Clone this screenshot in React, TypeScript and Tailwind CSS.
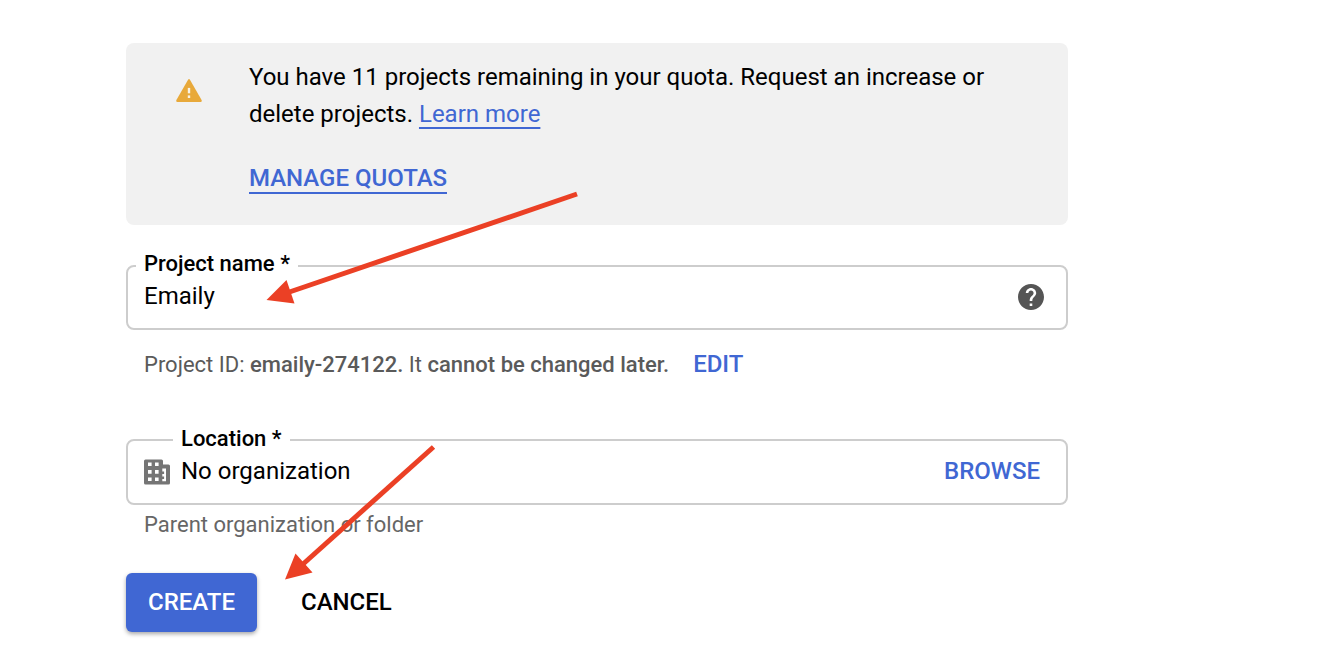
import { useState, type ReactNode } from "react";

function WarningIcon() {
  return (
    <svg viewBox="0 0 26 23" className="h-[23px] w-[26px]" aria-hidden="true">
      <path
        d="M12.2 0.6 Q13 -0.4 13.8 0.6 L25.6 21 Q26.2 23 24.6 23 H1.4 Q-0.2 23 0.4 21 Z"
        fill="#e8a93a"
      />
      <rect x="11.8" y="8.9" width="2.4" height="5.4" fill="#f8f3e6" />
      <rect x="11.8" y="16.4" width="2.4" height="2.6" fill="#f8f3e6" />
    </svg>
  );
}

function HelpIcon() {
  return (
    <svg viewBox="2 2 20 20" className="size-[26px]" fill="#555" aria-hidden="true">
      <path d="M12 2C6.48 2 2 6.48 2 12s4.48 10 10 10 10-4.48 10-10S17.52 2 12 2zm1 17h-2v-2h2v2zm2.07-7.75l-.9.92C13.45 12.9 13 13.5 13 15h-2v-.5c0-1.1.45-2.1 1.17-2.83l1.24-1.26c.37-.36.59-.86.59-1.41 0-1.1-.9-2-2-2s-2 .9-2 2H8c0-2.21 1.79-4 4-4s4 1.79 4 4c0 .88-.36 1.68-.93 2.25z" />
    </svg>
  );
}

function OrganizationIcon() {
  return (
    <svg viewBox="0 0 26 26" className="size-[26px]" aria-hidden="true">
      <path
        d="M1.5 0.5h16q1.5 0 1.5 1.5v3.5h5.5q1.5 0 1.5 1.5v17q0 1.5-1.5 1.5h-23q-1.5 0-1.5-1.5V2q0-1.5 1.5-1.5z"
        fill="#757575"
      />
      <path
        d="M4 3.5h3.6v3.6H4zM11 3.5h3.6v3.6H11zM4 11h3.6v3.8H4zM11 11h3.6v3.8H11zM4 18.5h3.6v3.6H4zM11 18.5h3.6v3.6H11zM18.3 9.5h3.7v12.7h-3.7v-2.2h1.8v-2.6h-1.8v-2.3h1.8v-2.6h-1.8z"
        fill="#fff"
      />
    </svg>
  );
}

function Arrows() {
  return (
    <svg
      width="1330"
      height="672"
      className="pointer-events-none absolute top-0 left-0"
      fill="#eb4025"
      stroke="#eb4025"
      aria-hidden="true"
    >
      <path d="M577 194L288 292.5" strokeWidth="5" />
      <path d="M266.5 300L286.5 280L294.5 303.5Z" stroke="none" />
      <path d="M433.5 447L302 565" strokeWidth="5" />
      <path d="M285 579.5L295.5 553.5L312.5 572.5Z" stroke="none" />
    </svg>
  );
}

type FieldProps = {
  id: string;
  label: string;
  value: string;
  onChange: (value: string) => void;
  icon?: ReactNode;
  action: ReactNode;
  legendClass: string;
  rowClass: string;
};

function Field({ id, label, value, onChange, icon, action, legendClass, rowClass }: FieldProps) {
  return (
    <fieldset className="rounded-lg border-2 border-[#cdcdcd]">
      <legend className={`px-2 text-[22px] leading-6 font-medium ${legendClass}`}>
        <label htmlFor={id}>{label}</label>
      </legend>
      <div className={`flex items-start gap-[11px] pb-4 pl-4 ${rowClass}`}>
        {icon}
        <input
          id={id}
          value={value}
          onChange={(e) => onChange(e.target.value)}
          className="h-8 min-w-0 flex-1 bg-transparent text-2xl leading-8 outline-none"
        />
        {action}
      </div>
    </fieldset>
  );
}

export default function App() {
  const [name, setName] = useState("Emaily");
  const [location, setLocation] = useState("No organization");

  return (
    <main className="relative min-h-screen overflow-hidden bg-white px-[126px] pt-[43px] font-['Roboto',sans-serif] text-black">
      <div className="w-full max-w-[942px]">
        <section className="flex rounded-lg bg-[#f1f1f1] pt-4 pb-[31px] pl-[50px]">
          <div className="w-[73px] shrink-0 pt-5">
            <WarningIcon />
          </div>
          <div className="min-w-0 flex-1 pr-16 text-2xl">
            <p className="leading-[37px]">
              You have 11 projects remaining in your quota. Request an increase or delete projects.{" "}
              <a
                href="#learn"
                className="text-[#4067d3] underline decoration-2 underline-offset-[5px] [text-decoration-skip-ink:none]"
              >
                Learn more
              </a>
            </p>
            <a
              href="#quotas"
              className="mt-[31px] inline-block border-b-2 border-[#4067d3] leading-7 font-medium text-[#4067d3]"
            >
              MANAGE QUOTAS
            </a>
          </div>
        </section>

        <form className="pt-[27px]" onSubmit={(e) => e.preventDefault()}>
          <Field
            id="project-name"
            label="Project name *"
            value={name}
            onChange={setName}
            legendClass="ml-2 pb-1"
            rowClass="pr-[22px]"
            action={
              <button type="button" aria-label="Help" className="pt-1">
                <HelpIcon />
              </button>
            }
          />
          <div className="flex items-center pt-[18px] pl-[18px] text-[22px] leading-8 text-[#5a5a5a]">
            <p>
              Project ID: <b className="font-medium">emaily-274122.</b> It{" "}
              <b className="font-medium">cannot be changed later.</b>
            </p>
            <button type="button" className="ml-6 pb-0.5 text-2xl font-medium text-[#4067d3]">
              EDIT
            </button>
          </div>

          <div className="pt-[45px]">
            <Field
              id="location"
              label="Location *"
              value={location}
              onChange={setLocation}
              legendClass="ml-[45px] pb-0.5"
              rowClass="pt-0.5 pr-[26px]"
              icon={
                <span className="pt-1">
                  <OrganizationIcon />
                </span>
              }
              action={
                <button type="button" className="text-2xl font-medium text-[#4067d3]">
                  BROWSE
                </button>
              }
            />
          </div>
          <p className="pt-1 pl-[18px] text-[22px] leading-8 text-[#666]">
            Parent organization or folder
          </p>

          <div className="flex items-center gap-[22px] pt-8 text-2xl font-medium">
            <button
              type="submit"
              className="h-[59px] rounded-md bg-[#4067d3] px-[22px] pb-0.5 text-white shadow-[0_2px_4px_rgba(0,0,0,0.35)]"
            >
              CREATE
            </button>
            <button type="button" className="h-[59px] px-[22px] pb-0.5">
              CANCEL
            </button>
          </div>
        </form>
      </div>
      <Arrows />
    </main>
  );
}
